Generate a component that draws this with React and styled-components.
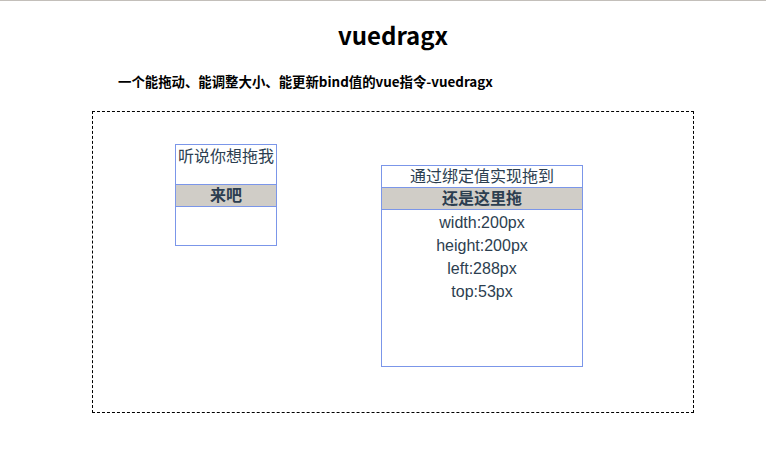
import React from "react";
import styled, { createGlobalStyle } from "styled-components";

const GlobalStyle = createGlobalStyle`
  html, body {
    margin: 0;
    padding: 0;
    background: #fff;
  }
  body {
    font-family: "Liberation Sans", "Noto Sans CJK SC", sans-serif;
  }
`;

const boxes = [
  {
    id: 1,
    title: "听说你想拖我",
    handle: "来吧",
    left: 82,
    top: 32,
    width: 100,
    height: 100,
    tall: true,
    showInfo: false,
  },
  {
    id: 2,
    title: "通过绑定值实现拖到",
    handle: "还是这里拖",
    left: 288,
    top: 53,
    width: 200,
    height: 200,
    tall: false,
    showInfo: true,
  },
];

const App = () => {
  return (
    <Page>
      <GlobalStyle />
      <Title>vuedragx</Title>
      <Subtitle>一个能拖动、能调整大小、能更新bind值的vue指令-vuedragx</Subtitle>
      <Stage>
        {boxes.map((b) => (
          <DragBox
            key={b.id}
            style={{ left: b.left, top: b.top, width: b.width, height: b.height }}
          >
            <BoxTitle tall={b.tall}>{b.title}</BoxTitle>
            <Handle>{b.handle}</Handle>
            {b.showInfo && (
              <Info>
                <InfoLine>width:{b.width}px</InfoLine>
                <InfoLine>height:{b.height}px</InfoLine>
                <InfoLine>left:{b.left}px</InfoLine>
                <InfoLine>top:{b.top}px</InfoLine>
              </Info>
            )}
          </DragBox>
        ))}
      </Stage>
    </Page>
  );
};
export default App;

const Page = styled.div`
  width: 766px;
  height: 462px;
  box-sizing: border-box;
  border-top: 1px solid #c3bfba;
  overflow: hidden;
`;

const Title = styled.h1`
  margin: 0;
  padding: 18px 0 0 20px;
  text-align: center;
  font-family: "Noto Sans CJK SC", "Noto Sans", sans-serif;
  font-size: 24px;
  line-height: 32px;
  font-weight: 700;
  color: #000;
`;

const Subtitle = styled.div`
  margin: 20px 0 0 118px;
  font-family: "Noto Sans CJK SC", "Noto Sans", sans-serif;
  font-size: 13.4px;
  line-height: 20px;
  font-weight: 700;
  color: #000;
`;

const Stage = styled.div`
  position: relative;
  margin: 20px 0 0 92px;
  width: 600px;
  height: 300px;
  border: 1px dashed #000;
`;

const DragBox = styled.div`
  position: absolute;
  border: 1px solid #7b96e9;
  color: #2c3e50;
  text-align: center;
  font-size: 16px;
`;

const BoxTitle = styled.div`
  box-sizing: border-box;
  height: ${(p) => (p.tall ? "39px" : "21px")};
  padding-top: ${(p) => (p.tall ? "1px" : "0")};
  line-height: 21px;
  white-space: nowrap;
`;

const Handle = styled.div`
  height: 21px;
  line-height: 21px;
  background: #d0cdc7;
  border-top: 1px solid #7b96e9;
  border-bottom: 1px solid #7b96e9;
  font-weight: 700;
`;

const Info = styled.div`
  padding-top: 1px;
`;

const InfoLine = styled.div`
  line-height: 23px;
`;
